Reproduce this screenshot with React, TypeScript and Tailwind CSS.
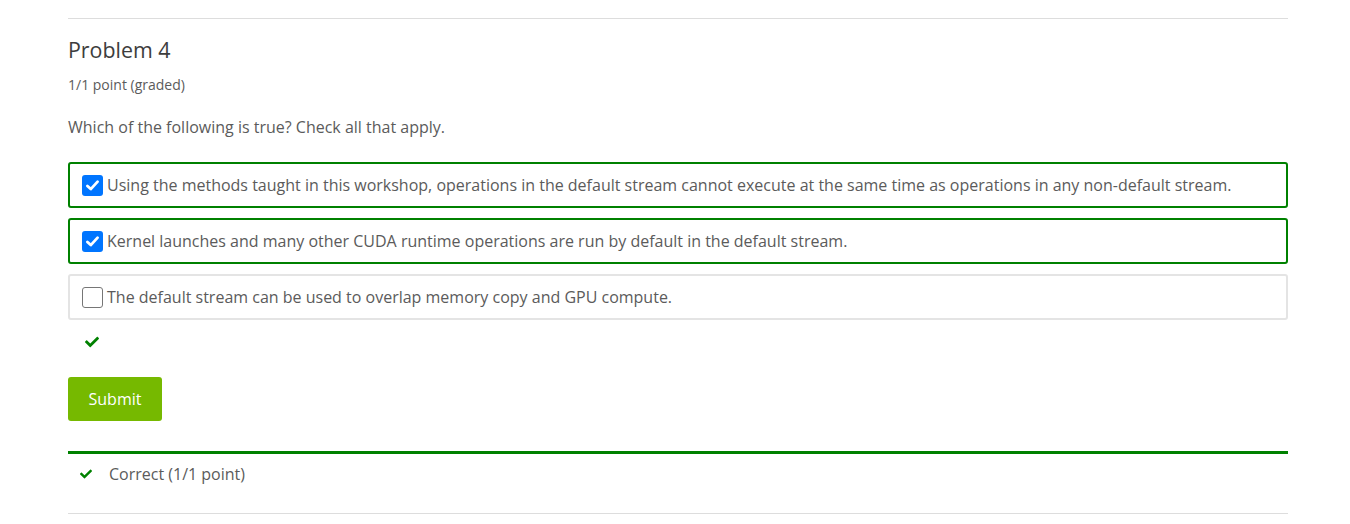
import { FaCheck } from "react-icons/fa";

const options = [
  {
    text: "Using the methods taught in this workshop, operations in the default stream cannot execute at the same time as operations in any non-default stream.",
    checked: true,
  },
  {
    text: "Kernel launches and many other CUDA runtime operations are run by default in the default stream.",
    checked: true,
  },
  {
    text: "The default stream can be used to overlap memory copy and GPU compute.",
    checked: false,
  },
];

function Box({ checked }: { checked: boolean }) {
  if (!checked) {
    return <span className="block h-[21px] w-[21px] shrink-0 rounded-[3px] border border-[#767676] bg-white" />;
  }
  return (
    <span className="flex h-[21px] w-[21px] shrink-0 items-center justify-center rounded-[3px] bg-[#0075ff]">
      <svg viewBox="0 0 16 16" className="h-[17px] w-[17px]">
        <path d="M3.2 8.4 L6.4 11.4 L12.8 4.4" fill="none" stroke="white" strokeWidth="2.6" strokeLinecap="round" strokeLinejoin="round" />
      </svg>
    </span>
  );
}

export default function App() {
  return (
    <div className="bg-white pt-[18px] font-['Open_Sans',sans-serif] text-[#5b5b5b]">
      <div className="ml-[68px] w-[1220px] border-t border-[#ddd]">
        <h2 className="mt-[17px] text-[21.4px] leading-[28px] text-[#3d3d3d]">Problem 4</h2>
        <p className="mt-[13px] text-[14px] leading-[16px]">1/1 point (graded)</p>
        <p className="mt-[24px] text-[16px] leading-[20px]">Which of the following is true? Check all that apply.</p>

        <ul className="mt-[25px] flex flex-col gap-[10px]">
          {options.map((o) => (
            <li
              key={o.text}
              className={`flex h-[46px] items-center rounded-[3px] border-2 pl-[12px] ${
                o.checked ? "border-[#008100]" : "border-[#e4e4e4]"
              }`}
            >
              <Box checked={o.checked} />
              <span className="ml-[4px] text-[16px] leading-[20px]">{o.text}</span>
            </li>
          ))}
        </ul>

        <div className="mt-[15px] flex h-[14px] pl-[16px] text-[#008100]">
          <FaCheck className="h-[14px] w-[16px]" />
        </div>

        <button className="mt-[28px] h-[44px] w-[94px] rounded-[3px] bg-[#76b900] text-[16px] text-white">
          Submit
        </button>

        <div className="mt-[30px] border-t-[3px] border-[#008100]">
          <div className="flex h-[40px] items-center pl-[11px]">
            <FaCheck className="h-[12px] w-[14px] text-[#008100]" />
            <span className="ml-[16px] text-[16px]">Correct (1/1 point)</span>
          </div>
        </div>
        <div className="mt-[19px] border-t border-[#ddd]" />
      </div>
    </div>
  );
}
